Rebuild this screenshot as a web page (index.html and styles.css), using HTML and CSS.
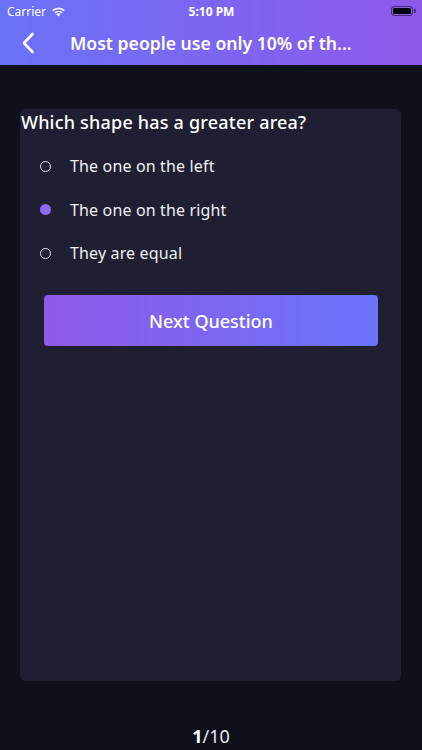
FILE: index.html
```
<!DOCTYPE html>
<html>
<head>
<meta charset="utf-8">
<link rel="stylesheet" href="styles.css">
</head>
<body>
<div class="screen">
  <header class="header">
    <div class="status">
      <div class="status-left">
        <span class="carrier">Carrier</span>
        <svg class="wifi" width="15" height="11" viewBox="0 0 15 11">
          <path d="M7.5 10.5 L5.3 8.2 A3.2 3.2 0 0 1 9.7 8.2 Z" fill="#fff"/>
          <path d="M3.4 6.3 A5.9 5.9 0 0 1 11.6 6.3 L10.4 7.5 A4.2 4.2 0 0 0 4.6 7.5 Z" fill="#fff"/>
          <path d="M1.2 4.1 A9 9 0 0 1 13.8 4.1 L12.6 5.3 A7.3 7.3 0 0 0 2.4 5.3 Z" fill="#fff"/>
        </svg>
      </div>
      <div class="time">5:10 PM</div>
      <div class="status-right">
        <div class="battery"><div class="battery-fill"></div></div>
        <div class="battery-tip"></div>
      </div>
    </div>
    <div class="nav">
      <svg class="back" width="14" height="22" viewBox="0 0 14 22">
        <path d="M11.5 2 L3 11 L11.5 20" fill="none" stroke="#fff" stroke-width="2.6" stroke-linecap="round" stroke-linejoin="round"/>
      </svg>
      <div class="title">Most people use only 10% of th...</div>
    </div>
  </header>
  <main class="content">
    <section class="card">
      <h2 class="question">Which shape has a greater area?</h2>
      <ul class="options">
        <li class="option"><span class="radio"></span><span>The one on the left</span></li>
        <li class="option"><span class="radio checked"></span><span>The one on the right</span></li>
        <li class="option"><span class="radio"></span><span>They are equal</span></li>
      </ul>
      <button class="next">Next Question</button>
    </section>
  </main>
  <footer class="pager"><b>1</b>/10</footer>
</div>
</body>
</html>
```
FILE: styles.css
```
* { box-sizing: border-box; }
html, body { margin: 0; padding: 0; }
body {
  width: 422px;
  height: 750px;
  background: #0e101b;
  font-family: "Noto Sans", "Open Sans", sans-serif;
  color: #fff;
  overflow: hidden;
}
.screen {
  display: flex;
  flex-direction: column;
  height: 750px;
}
.header {
  height: 65px;
  background: linear-gradient(90deg, #6a72f8 0%, #8e59e9 100%);
  display: flex;
  flex-direction: column;
}
.status {
  height: 22px;
  display: flex;
  align-items: center;
  justify-content: space-between;
  padding: 0 6px 0 7px;
  font-size: 12px;
}
.status-left {
  width: 120px;
  display: flex;
  align-items: center;
  gap: 5px;
}
.carrier { font-size: 12px; }
.time { font-weight: 700; font-size: 12px; }
.status-right {
  width: 120px;
  display: flex;
  justify-content: flex-end;
  align-items: center;
}
.battery {
  width: 22px;
  height: 10px;
  border: 1px solid rgba(0,0,0,0.5);
  border-radius: 3px;
  padding: 1px;
}
.battery-fill { width: 100%; height: 100%; background: #000; border-radius: 1.5px; }
.battery-tip { width: 1.5px; height: 4px; background: rgba(0,0,0,0.5); margin-left: 1px; border-radius: 0 1px 1px 0; }
.nav {
  flex: 1;
  display: flex;
  align-items: center;
  padding-left: 21px;
  padding-bottom: 2px;
}
.back { flex: none; }
.title {
  margin-left: 35px;
  font-size: 17.6px;
  font-weight: 600;
  white-space: nowrap;
}
.content {
  flex: 1;
  padding: 44px 21px 0 20px;
  display: flex;
  flex-direction: column;
}
.card {
  height: 572px;
  background: #1f1f31;
  border-radius: 5px;
  display: flex;
  flex-direction: column;
}
.question {
  margin: 0;
  padding: 1px 0 0 1px;
  font-size: 18px;
  font-weight: 500;
  line-height: 24px;
  letter-spacing: 0.2px;
}
.options {
  list-style: none;
  margin: 20px 0 0 0;
  padding: 0 0 0 20px;
  display: flex;
  flex-direction: column;
  gap: 19.5px;
}
.option {
  display: flex;
  align-items: center;
  height: 24px;
  font-size: 16px;
  color: #f0f0f4;
  letter-spacing: 0.15px;
}
.radio {
  width: 11px;
  height: 11px;
  border: 1.5px solid #e8e8ee;
  border-radius: 50%;
  margin-left: 0;
  margin-right: 19px;
}
.radio.checked {
  border: none;
  background: #8a6cf5;
}
.next {
  margin: 30px 23px 0 24px;
  height: 51px;
  border: none;
  border-radius: 4px;
  background: linear-gradient(90deg, #8e59e8 0%, #6b74fb 100%);
  color: #fff;
  font-family: inherit;
  font-size: 18px;
  font-weight: 500;
}
.pager {
  text-align: center;
  font-size: 18px;
  padding-bottom: 2px;
  height: 34px;
  display: flex;
  align-items: flex-end;
  justify-content: center;
  color: #e8e8ee;
}
.pager b { font-weight: 700; color: #fff; }
```
